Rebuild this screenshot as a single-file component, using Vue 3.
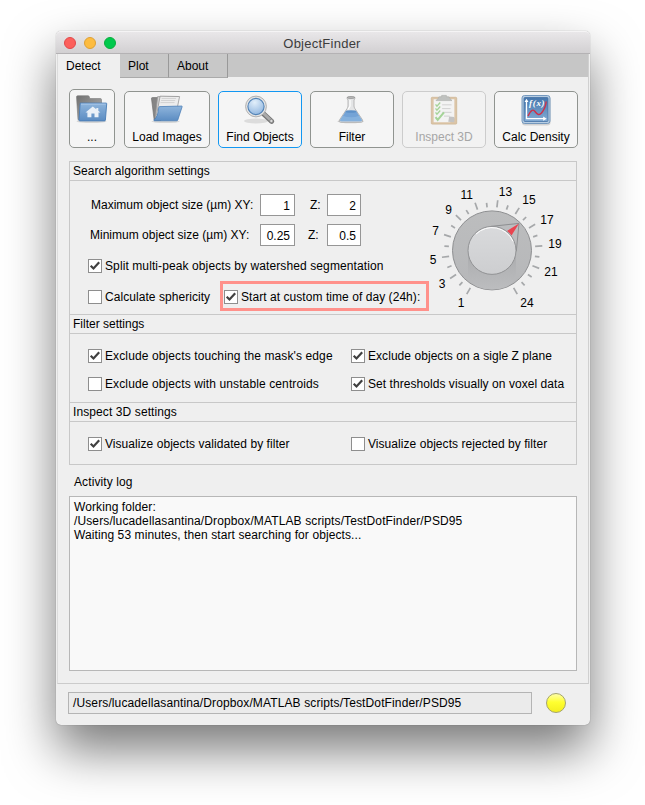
<script setup>
const tabs = ['Detect', 'Plot', 'About']
const dialLabels = [
  [1, 461, 303], [3, 442, 284], [5, 433, 260], [7, 435.5, 231], [9, 448.7, 210], [11, 466.7, 195],
  [13, 505.5, 192], [15, 529, 200], [17, 547, 220], [19, 555, 244], [21, 551, 272], [24, 527, 303],
].map(([n, x, y]) => ({ n, x: x - 422, y: y - 181 + 4.3 }))
const ticks = Array.from({ length: 24 }, (_, i) => {
  const n = i + 1
  const major = n === 24 || (n % 2 === 1 && n !== 23)
  return { n, major, angle: -150 + (300 / 23) * i }
})
const logLines = [
  ['Working folder:', 'l1'],
  ['/Users/lucadellasantina/Dropbox/MATLAB scripts/TestDotFinder/PSD95', 'l2'],
  ['Waiting 53 minutes, then start searching for objects...', 'l3'],
]
</script>

<template>
  <div class="window">
    <header class="titlebar">
      <div class="lights"><i class="red"></i><i class="amber"></i><i class="green"></i></div>
      <span class="title">ObjectFinder</span>
    </header>

    <div class="tabpane">
      <nav class="tabs">
        <span v-for="(t, i) in tabs" :key="t" class="tab" :class="['tab' + i]">{{ t }}</span>
      </nav>

      <div class="toolbar">
        <button class="tool home">
          <svg width="34" height="32" viewBox="0 0 34 32">
            <defs>
              <linearGradient id="blue" x1="0" y1="0" x2="0" y2="1"><stop offset="0" stop-color="#8fb5dc" /><stop offset="1" stop-color="#5b8cc2" /></linearGradient>
              <linearGradient id="grey" x1="0" y1="0" x2="1" y2="1"><stop offset="0" stop-color="#707070" /><stop offset="1" stop-color="#b4b4b4" /></linearGradient>
            </defs>
            <g transform="translate(-1.500 -.3)">
              <ellipse cx="18" cy="27.500" rx="15" ry="1.800" fill="#000" opacity=".13" />
              <path d="M3 3.300q0-1.300 1.300-1.300h10.200q1 0 1.300 1l.5 1.800h10.400q1.300 0 1.300 1.300V26H4.500z" fill="url(#grey)" stroke="#7c7c7c" stroke-width=".6" />
              <path d="M6.700 9.400h26q.6 0 .5.800l-1.300 16.100q-.1.900-1 .9H6.300q-.8 0-.8-.8z" fill="url(#blue)" stroke="#4a7db5" stroke-width=".9" />
              <path d="M7.500 10.400h24.700" stroke="#accaea" stroke-width=".9" />
              <path d="M19.300 12.800l-7.300 6.100h1.900v4.600h4v-3.600h3.100v3.600h4v-4.600h1.900l-2.100-1.800v-2.700h-2v1.100z" fill="#eaf1f8" />
            </g>
          </svg>
          <span>...</span>
        </button>
        <button class="tool load">
          <svg width="36" height="32" viewBox="0 0 36 32">
            <g transform="translate(.6 .4) scale(.94 .97)">
              <ellipse cx="17" cy="28" rx="15" ry="1.600" fill="#000" opacity=".12" />
              <path d="M2 4.200q0-.9 1-.9h6l1.500 1.800 1.500 21.800H6q-1 0-1.200-1z" fill="#858585" stroke="#6e6e6e" stroke-width=".7" />
              <path d="M8.500 2.300h22l-4.300 22H6z" fill="#d2d2d2" stroke="#969696" stroke-width=".8" />
              <path d="M11.200 1.800l20.700.4-4 19H7.400z" fill="#ededed" stroke="#929292" stroke-width=".8" />
              <path d="M12.800 4.200h15.400M12.200 6.300h15M11.500 8.400h15" stroke="#cbcbcb" stroke-width=".8" />
              <path d="M11 12.600l23.100-.6q.7 0 .5.800L30 26.300q-.3.900-1.300.9H5.300q-1 0-.7-.9Q9.100 23 9.700 13.600q0-1 1.300-1z" fill="url(#blue)" stroke="#4a7db5" stroke-width=".8" />
            </g>
          </svg>
          <span>Load Images</span>
        </button>
        <button class="tool find">
          <svg width="36" height="32" viewBox="0 0 36 32">
            <defs><radialGradient id="lens" cx=".42" cy=".25" r=".8"><stop offset="0" stop-color="#e2effa" /><stop offset="1" stop-color="#8fb5df" /></radialGradient></defs>
            <ellipse cx="14" cy="27" rx="12" ry="2.600" fill="#000" opacity=".1" />
            <path d="M20.500 18.800l9.200 8.500" stroke="#777" stroke-width="5" stroke-linecap="round" />
            <path d="M20.800 18.700l8.200 7.800" stroke="#aaa" stroke-width="3" stroke-linecap="round" />
            <circle cx="29.400" cy="27" r="1.700" fill="#ddd" stroke="#777" stroke-width=".7" />
            <circle cx="14" cy="12.500" r="10.400" fill="#e4e4e4" stroke="#a8a8a8" stroke-width=".9" />
            <circle cx="14" cy="12.500" r="8.100" fill="url(#lens)" stroke="#5283b6" stroke-width="1.100" />
          </svg>
          <span>Find Objects</span>
        </button>
        <button class="tool filter">
          <svg width="34" height="32" viewBox="0 0 34 32">
            <ellipse cx="15.500" cy="27.300" rx="13" ry="2" fill="#000" opacity=".16" />
            <path d="M12.200 3.200h7.600V5l-.8.900v6q0 1.300.7 2.400l7.800 11.600q1.200 2.300-1.400 2.300H5.900q-2.600 0-1.400-2.300L12.300 14.300q.7-1.100.7-2.400v-6l-.8-.9z" fill="#e4e5e6" stroke="#a8a8a8" stroke-width=".8" />
            <path d="M10.500 17.500h11l5.200 8.300q.8 1.500-1 1.500H6.300q-1.800 0-1-1.500z" fill="#74a3d6" />
            <path d="M7.800 21.800l-2.500 4q-.8 1.500 1 1.500h19.400q1.800 0 1-1.500l-2.500-4q-8 3-16.400 0z" fill="#8db6e0" opacity=".7" />
            <ellipse cx="16" cy="17.500" rx="5.500" ry="1.300" fill="#5e91c8" />
            <ellipse cx="16" cy="3.500" rx="3.700" ry="1" fill="#bababa" stroke="#858585" stroke-width=".6" />
            <path d="M15 6v6.200l-2 3.300" stroke="#fff" stroke-width="1.200" fill="none" />
          </svg>
          <span>Filter</span>
        </button>
        <button class="tool inspect" disabled>
          <svg width="34" height="34" viewBox="0 0 34 34">
            <rect x="3.500" y="3.500" width="27" height="28.500" rx="1" fill="#dcc5a7" stroke="#cdb594" stroke-width=".8" />
            <path d="M6 5.500h22v20l-4.500 4.500H6z" fill="#f3f3f3" />
            <path d="M21.500 29.500l1-5.500 5.500.5v4.500q0 .9-1 .9z" fill="#c3c3c3" />
            <path d="M11 4.500q0-1.500 1.500-1.500h2V1.500h5V3h2Q23 3 23 4.500L25.500 7h-17z" fill="#bfc1bf" stroke="#adb0ad" stroke-width=".7" />
            <path d="M15 11.500h10M15 15.500h9M15 19.500h10M17 23.500h6" stroke="#cfcfcf" stroke-width="1" />
            <path d="M8 11l1.500 2 3.500-4M8 15.300l1.500 2 3.500-4M8 19.500l1.500 2 3.500-4" stroke="#a5d498" stroke-width="1.400" fill="none" />
            <path d="M8 24.500l2.300 3 6.700-8" stroke="#a5d498" stroke-width="2.200" fill="none" />
          </svg>
          <span>Inspect 3D</span>
        </button>
        <button class="tool density">
          <svg width="32" height="32" viewBox="0 0 32 32">
            <defs><linearGradient id="fx" x1="0" y1="0" x2="0" y2="1"><stop offset="0" stop-color="#4676ac" /><stop offset="1" stop-color="#83acd4" /></linearGradient></defs>
            <rect x="2" y="2.500" width="28.500" height="29" rx="3" fill="#000" opacity=".14" />
            <rect x="2" y="1.500" width="28" height="28" rx="2.500" fill="#b7cde2" stroke="#6b92ba" stroke-width=".9" />
            <rect x="4" y="3.500" width="24" height="24" rx="1" fill="url(#fx)" stroke="#4471a4" stroke-width=".8" />
            <path d="M6.500 25.200V7M6 24.700h18" stroke="#fff" stroke-width="1.300" />
            <path d="M4.500 8l2-3.200 2 3.200zM23.200 22.600l3.500 2.100-3.500 2.100z" fill="#fff" />
            <path d="M8 22c3-6 5-7.200 7-4.500s4 4.500 6.500 1.500 4.300-7 4.700-11.500" stroke="#cf3048" stroke-width="1.400" fill="none" />
            <text x="9" y="12.300" class="fx">f(x)</text>
          </svg>
          <span>Calc Density</span>
        </button>
      </div>

      <div class="settings">
        <section class="search">
          <h2><span class="h1">Search algorithm settings</span></h2>
          <div class="body search-body">
            <div class="fields">
              <div class="size-row">
                <label class="xy">Maximum object size (µm) XY:</label><span class="input wide">1</span>
                <label class="z">Z:</label><span class="input">2</span>
              </div>
              <div class="size-row">
                <label class="xy min">Minimum object size (µm) XY:</label><span class="input wide">0.25</span>
                <label class="z zmin">Z:</label><span class="input">0.5</span>
              </div>
              <div class="check split"><i class="box on"><svg viewBox="0 0 12 12"><path d="M1.700 5.700l2.800 2.800 5.700-6.200" /></svg></i><span>Split multi-peak objects by watershed segmentation</span></div>
              <div class="last-row">
                <div class="check sph"><i class="box"></i><span>Calculate sphericity</span></div>
                <div class="check highlight"><i class="box on"><svg viewBox="0 0 12 12"><path d="M1.700 5.700l2.800 2.800 5.700-6.200" /></svg></i><span>Start at custom time of day (24h):</span></div>
              </div>
            </div>
            <svg class="dial" width="150" height="133" viewBox="0 0 150 133">
              <defs>
                <linearGradient id="ring" x1="0" y1="0" x2="0" y2="1"><stop offset="0" stop-color="#bcbdbe" /><stop offset="1" stop-color="#b6b7b9" /></linearGradient>
                <linearGradient id="fall" x1="0" y1="0" x2="0" y2="1"><stop offset="0" stop-color="#aaabad" /><stop offset="1" stop-color="#bcbdbf" /></linearGradient>
                <linearGradient id="knob" x1="0" y1="0" x2="0" y2="1"><stop offset="0" stop-color="#d9dadc" /><stop offset="1" stop-color="#cdced0" /></linearGradient>
              </defs>
              <g transform="translate(70 69.400)">
                <line v-for="t in ticks" :key="t.n" x1="0" x2="0" y1="-43.300" :y2="t.major ? -50.500 : -47.800" :transform="`rotate(${t.angle})`" stroke="#a6a8aa" stroke-width="1.700" />
                <circle r="39.500" fill="url(#ring)" stroke="#8e8f91" stroke-width="1" />
                <path d="M-24 0V25Q-23 32 -14 36.500A39 39 0 0 0 14 36.500Q23 32 24 25V0z" fill="url(#fall)" />
                <path d="M-1 -24L27 -27L24.300 1" fill="#bcbdbf" stroke="#88898b" stroke-width=".9" />
                <path d="M27 -27L15 -19.500A24 24 0 0 1 19.500 -15z" fill="#ea4450" />
                <circle r="24" fill="url(#knob)" stroke="#929395" stroke-width="1" />
                <path d="M-16 -16.300A22.900 22.900 0 0 1 21 -9" fill="none" stroke="#fff" stroke-width="1" />
              </g>
              <text v-for="l in dialLabels" :key="l.n" :x="l.x" :y="l.y" text-anchor="middle">{{ l.n }}</text>
            </svg>
          </div>
        </section>
        <section class="filters">
          <h2><span class="h2">Filter settings</span></h2>
          <div class="body grid">
            <div class="check c1"><i class="box on"><svg viewBox="0 0 12 12"><path d="M1.700 5.700l2.800 2.800 5.700-6.200" /></svg></i><span>Exclude objects touching the mask's edge</span></div>
            <div class="check c2"><i class="box on"><svg viewBox="0 0 12 12"><path d="M1.700 5.700l2.800 2.800 5.700-6.200" /></svg></i><span>Exclude objects on a sigle Z plane</span></div>
            <div class="check c3"><i class="box"></i><span>Exclude objects with unstable centroids</span></div>
            <div class="check c4"><i class="box on"><svg viewBox="0 0 12 12"><path d="M1.700 5.700l2.800 2.800 5.700-6.200" /></svg></i><span>Set thresholds visually on voxel data</span></div>
          </div>
        </section>
        <section class="inspect3d">
          <h2><span class="h3">Inspect 3D settings</span></h2>
          <div class="body grid">
            <div class="check c5"><i class="box on"><svg viewBox="0 0 12 12"><path d="M1.700 5.700l2.800 2.800 5.700-6.200" /></svg></i><span>Visualize objects validated by filter</span></div>
            <div class="check c6"><i class="box"></i><span>Visualize objects rejected by filter</span></div>
          </div>
        </section>
      </div>

      <div class="log-title"><span>Activity log</span></div>
      <div class="log"><div v-for="[line, c] in logLines" :key="c"><span :class="c">{{ line }}</span></div></div>
    </div>

    <footer class="status">
      <div class="path"><span class="l2">/Users/lucadellasantina/Dropbox/MATLAB scripts/TestDotFinder/PSD95</span></div>
      <i class="lamp"></i>
    </footer>
  </div>
</template>

<style>
body { background: #fff; }
#app { display: flow-root; height: 805px; overflow: hidden; }
</style>

<style scoped>
* { box-sizing: border-box; }
.window {
  margin: 31px 0 0 56px; width: 534px; height: 694px; border-radius: 5px;
  background: #efefef; display: flex; flex-direction: column;
  font: 12px/14px "Liberation Sans", Arial, sans-serif; color: #000; white-space: nowrap;
  box-shadow: 0 0 1px rgba(0, 0, 0, .45), 0 25px 50px rgba(0, 0, 0, .53);
}
.titlebar {
  height: 23px; flex: none; display: grid; grid-template-columns: 62px 1fr 62px; align-items: center;
  border-radius: 5px 5px 0 0; border-bottom: 1px solid #b4b2b4; border-top: 1px solid #f5f4f5;
  background: linear-gradient(#e9e7e9, #d2d0d2);
}
.lights { display: flex; gap: 8px; padding-left: 8px; margin-top: 1px; }
.lights i { width: 12px; height: 12px; border-radius: 50%; }
.red { background: #fc605c; border: 1px solid #e2484a; }
.amber { background: #fdbc40; border: 1px solid #dea035; }
.green { background: #00c94d; border: 1px solid #0aad3d; }
.title { text-align: center; font-size: 13px; letter-spacing: .25px; color: #3c3c3c; margin: 3px 2px 0 0; }
.tabpane { height: 630px; margin: 0 1px; flex: none; border-left: 1px solid #dcdcdc; border-right: 1px solid #d0d0d0; border-bottom: 1px solid #cbcbcb; }
.tabs { height: 23px; background: #c6c6c6; display: flex; }
.tab { height: 24px; padding-top: 5px; border-right: 1px solid #999; border-bottom: 1px solid #aaa; background: #c8c8c8; }
.tab0 { width: 62px; padding-left: 8px; background: #efefef; border: none; padding-top: 5px; }
.tab1 { width: 49px; padding-left: 8px; }
.tab2 { width: 59px; padding-left: 8px; }
.toolbar { display: flex; align-items: flex-end; height: 71px; padding-left: 11px; gap: 8px; }
.tool {
  font: inherit; color: inherit; margin: 0; padding: 2px 0 0; height: 57px; width: 84px; background: #f5f5f5;
  border: 1px solid #909490; border-radius: 5px; display: flex; flex-direction: column; align-items: center;
}
.tool svg { height: 32px; flex: none; }
.tool span { margin-top: 4px; }
.home { width: 46px; height: 59px; margin-right: 1px; }
.home svg { margin-top: 2px; }
.load { width: 86px; }
.find { border-color: #1297f2; }
.inspect { border-color: #ccc; color: #a6a6a6; background: #f2f2f2; }
.fx { font: italic 700 9px "Liberation Serif", serif; letter-spacing: .7px; fill: #fff; }
.settings { margin: 13px 0 0 11px; width: 508px; height: 304px; border: 1px solid #c8c8c8; }
h2 { margin: 0; font: inherit; height: 19px; padding: 2px 0 0 3px; border-bottom: 1px solid #c8c8c8; }
.body { border-bottom: 1px solid #c8c8c8; }
.search-body { height: 134px; display: flex; }
.fields { width: 352px; padding-top: 13px; }
.size-row { display: flex; height: 22px; margin-bottom: 8px; padding-left: 21px; align-items: center; }
.xy { width: 169px; }
.min { letter-spacing: .01px; margin-left: -1px; width: 170px; }
.z { width: 17px; margin-left: 15px; }
.zmin { width: 19px; margin-left: 13px; }
.input { width: 34px; height: 22px; border: 1px solid #969696; background: #fff; text-align: right; padding: 4px 4px 0 0; }
.input.wide { width: 35px; }
.check { display: flex; align-items: center; height: 14px; letter-spacing: .055px; }
.box { width: 14px; height: 14px; border: 1px solid #8e8e8e; background: #fff; margin-right: 3px; flex: none; }
.box svg { display: block; width: 12px; height: 12px; }
.box path { fill: none; stroke: #404040; stroke-width: 2.200; }
.split { margin: 13px 0 0 18px; letter-spacing: .1px; }
.c1, .c3 { letter-spacing: .115px; }
.h1 { letter-spacing: .06px; }
.h3, .log-title { letter-spacing: .1px; }
.l1, .l3 { letter-spacing: .09px; }
.l2 { letter-spacing: .118px; }
.last-row { display: flex; margin: 8px 0 0 18px; align-items: center; }
.sph { width: 132px; flex: none; margin-top: 2px; }
.highlight { flex: none; width: 209px; height: 30px; border: 3px solid #ff918b; padding: 2px 0 0 1px; }
.dial { flex: none; }
.dial text { font-size: 12px; }
.grid { display: grid; grid-template-columns: 263px 1fr; grid-auto-rows: 14px; row-gap: 14px; padding: 15px 0 0 18px; height: 69px; }
.inspect3d .grid { height: 42px; border: none; }
.log-title { height: 31px; padding: 10px 0 0 16px; }
.log { margin: 0 0 0 11px; width: 508px; height: 175px; border: 1px solid #b7b7b7; background: #f9f9f9; padding: 3px 4px; }
.status { flex: 1; display: flex; padding: 8px 0 0 12px; }
.path { width: 464px; height: 22px; border: 1px solid #b4b4b4; background: #ebebeb; padding: 3px 4px; }
.lamp { width: 20px; height: 20px; border: 1px solid #a5a56b; border-radius: 50%; margin: 1px 0 0 14px; background: linear-gradient(#ffffa8, #ffff30 45%, #f4ee20); }
</style>
